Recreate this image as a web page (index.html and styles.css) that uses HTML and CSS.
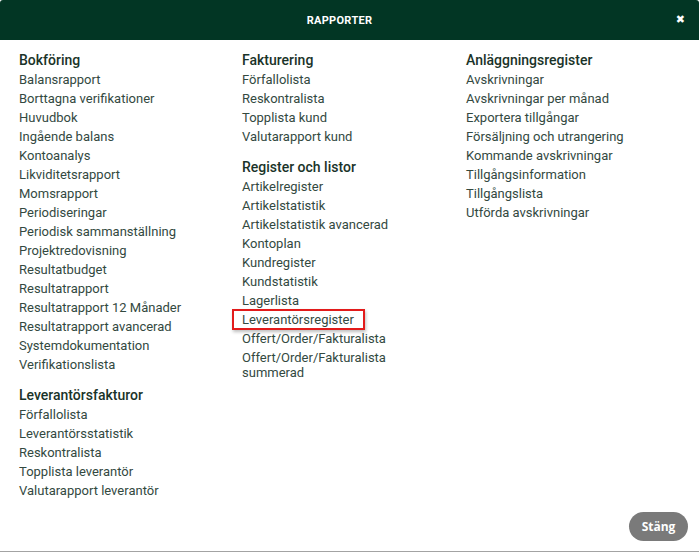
FILE: index.html
```html
<!DOCTYPE html>
<html lang="sv">
<head>
<meta charset="utf-8">
<title>Rapporter</title>
<link rel="stylesheet" href="styles.css">
</head>
<body>
<div class="modal">
  <header class="modal-header">
    <h1 class="modal-title">RAPPORTER</h1>
    <span class="modal-close">&#x2716;</span>
  </header>
  <div class="modal-body">
    <div class="col">
      <h2 class="group-title">Bokföring</h2>
      <ul class="list">
        <li>Balansrapport</li>
        <li>Borttagna verifikationer</li>
        <li>Huvudbok</li>
        <li>Ingående balans</li>
        <li>Kontoanalys</li>
        <li>Likviditetsrapport</li>
        <li>Momsrapport</li>
        <li>Periodiseringar</li>
        <li>Periodisk sammanställning</li>
        <li>Projektredovisning</li>
        <li>Resultatbudget</li>
        <li>Resultatrapport</li>
        <li>Resultatrapport 12 Månader</li>
        <li>Resultatrapport avancerad</li>
        <li>Systemdokumentation</li>
        <li>Verifikationslista</li>
      </ul>
      <h2 class="group-title">Leverantörsfakturor</h2>
      <ul class="list">
        <li>Förfallolista</li>
        <li>Leverantörsstatistik</li>
        <li>Reskontralista</li>
        <li>Topplista leverantör</li>
        <li>Valutarapport leverantör</li>
      </ul>
    </div>
    <div class="col">
      <h2 class="group-title">Fakturering</h2>
      <ul class="list">
        <li>Förfallolista</li>
        <li>Reskontralista</li>
        <li>Topplista kund</li>
        <li>Valutarapport kund</li>
      </ul>
      <h2 class="group-title">Register och listor</h2>
      <ul class="list">
        <li>Artikelregister</li>
        <li>Artikelstatistik</li>
        <li>Artikelstatistik avancerad</li>
        <li>Kontoplan</li>
        <li>Kundregister</li>
        <li>Kundstatistik</li>
        <li>Lagerlista</li>
        <li class="marked">Leverantörsregister</li>
        <li>Offert/Order/Fakturalista</li>
        <li>Offert/Order/Fakturalista summerad</li>
      </ul>
    </div>
    <div class="col">
      <h2 class="group-title">Anläggningsregister</h2>
      <ul class="list">
        <li>Avskrivningar</li>
        <li>Avskrivningar per månad</li>
        <li>Exportera tillgångar</li>
        <li>Försäljning och utrangering</li>
        <li>Kommande avskrivningar</li>
        <li>Tillgångsinformation</li>
        <li>Tillgångslista</li>
        <li>Utförda avskrivningar</li>
      </ul>
    </div>
  </div>
  <footer class="modal-footer">
    <button class="btn-close">Stäng</button>
  </footer>
</div>
</body>
</html>
```

FILE: styles.css
```css
html, body {
  margin: 0;
  padding: 0;
  background: #ffffff;
}
body {
  font-family: Roboto, "Liberation Sans", sans-serif;
  width: 699px;
  height: 553px;
  overflow: hidden;
}
.modal {
  width: 699px;
  height: 552px;
  border-bottom: 1px solid #a3a3a3;
  display: flex;
  flex-direction: column;
  box-sizing: border-box;
  background: #fff;
}
.modal-header {
  height: 40px;
  background: #023624;
  border-radius: 3px 3px 0 0;
  display: flex;
  align-items: center;
  justify-content: center;
  padding-right: 20px;
  position: relative;
  flex: none;
}
.modal-title {
  margin: 0;
  font-size: 11px;
  font-weight: 700;
  color: #ffffff;
  letter-spacing: 0.3px;
}
.modal-close {
  position: absolute;
  right: 14px;
  top: 13px;
  color: #ffffff;
  font-size: 11px;
  font-weight: 700;
  font-family: "DejaVu Sans", sans-serif;
  line-height: 14px;
}
.modal-body {
  flex: 1;
  display: grid;
  grid-template-columns: 223px 224px 1fr;
  padding: 11px 0 0 19px;
}
.group-title {
  margin: 12px 0 0 0;
  font-size: 14px;
  font-weight: 500;
  color: #1a3329;
  line-height: 19px;
}
.col > .group-title:first-child {
  margin-top: 0;
}
.list {
  list-style: none;
  margin: 0;
  padding: 0;
  max-width: 190px;
}
.list li {
  font-size: 13px;
  color: #33493f;
  line-height: 15px;
  padding: 2px 0;
}
.list li.marked {
  position: relative;
}
.list li.marked::after {
  content: "";
  position: absolute;
  left: -10px;
  top: -1px;
  width: 133px;
  height: 21px;
  border: 2px solid #e21b1b;
  box-sizing: border-box;
  box-shadow: 1px 2px 3px rgba(0, 0, 0, 0.25);
}
.modal-footer {
  display: flex;
  justify-content: flex-end;
  padding: 0 11px 10px 0;
  flex: none;
}
.btn-close {
  font-family: "Open Sans", Roboto, sans-serif;
  font-size: 12px;
  font-weight: 700;
  color: #ffffff;
  background: #7a7a7a;
  border: none;
  border-radius: 15px;
  width: 59px;
  height: 29px;
  padding: 0;
}
```
